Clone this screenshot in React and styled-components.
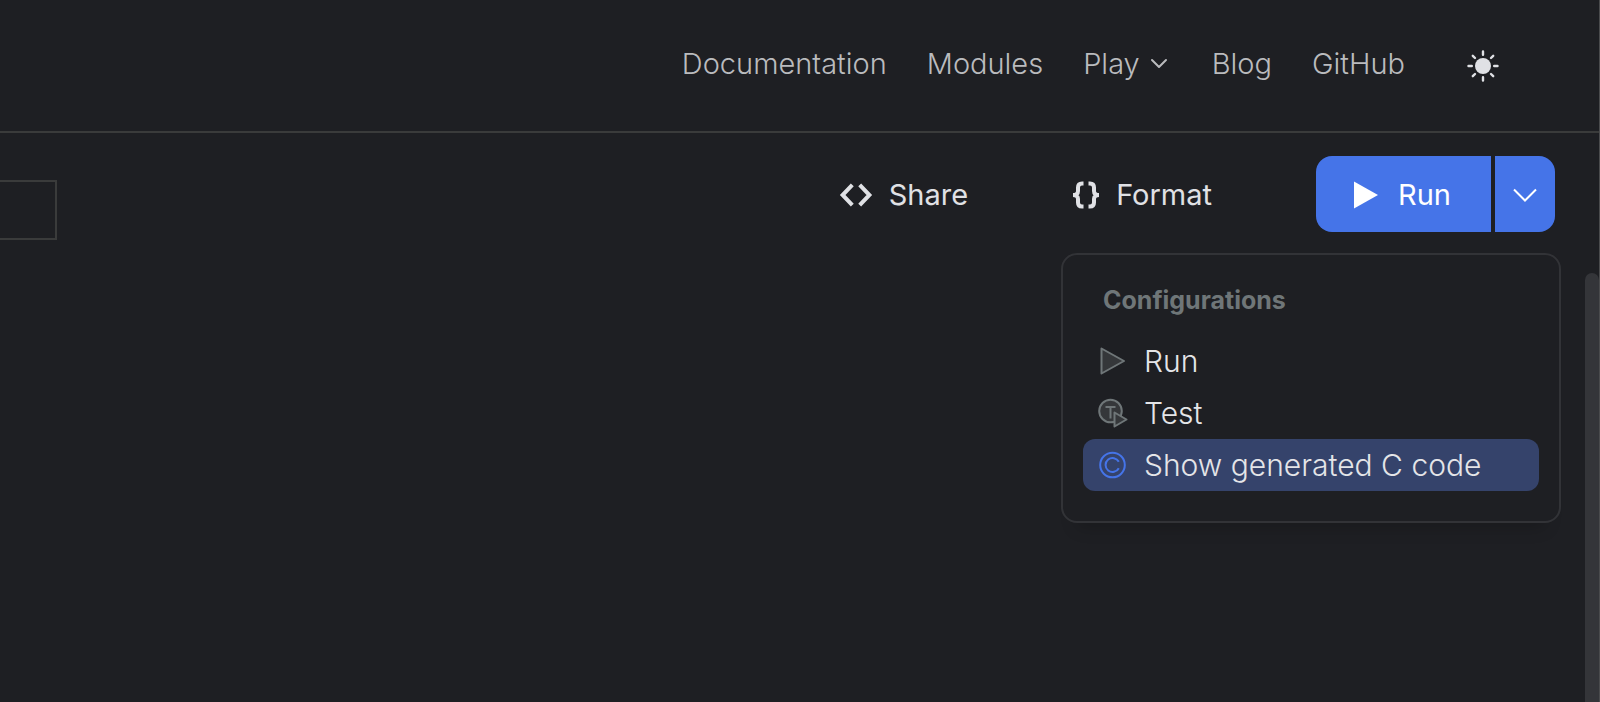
import React from "react";
import styled, { createGlobalStyle } from "styled-components";

const GlobalStyle = createGlobalStyle`
  *, *::before, *::after { box-sizing: border-box; }
  body {
    margin: 0;
    background: #1e1f23;
    font-family: Inter, "Liberation Sans", sans-serif;
    font-size: 29px;
    line-height: 36px;
    color: #e0e1e5;
  }
  button { font: inherit; color: inherit; background: none; border: 0; padding: 0; cursor: pointer; }
  svg { display: block; flex: none; }
`;

const Page = styled.div`
  display: flex;
  flex-direction: column;
  min-height: 100vh;
  overflow: hidden;
  border-right: 1px solid #4a4b4d;
`;

const Header = styled.header`
  display: flex;
  align-items: flex-end;
  justify-content: flex-end;
  padding: 46px 100px 49px 0;
  border-bottom: 2px solid #3a3b3b;
`;

const Nav = styled.nav`
  display: flex;
  align-items: center;
  gap: 40px;
  font-weight: 350;
  color: #babbbe;
`;

const NavLink = styled.a`
  color: inherit;
  text-decoration: none;
`;

const NavMenu = styled.button`
  display: flex;
  align-items: center;
  gap: 10px;
  padding-right: 4px;
`;

const ThemeButton = styled.button`
  margin-left: 62px;
`;

const Toolbar = styled.div`
  display: flex;
  align-items: flex-start;
  justify-content: space-between;
  padding: 23px 44px 0 0;
`;

const SelectFrame = styled.div`
  width: 57px;
  height: 60px;
  margin-top: 24px;
  border: 2px solid #3a3b3b;
  border-left: 0;
`;

const Actions = styled.div`
  display: flex;
  align-items: center;
`;

const ActionButton = styled.button`
  display: flex;
  align-items: center;
  gap: 16px;
  height: 76px;
  padding-top: 2px;
  margin-right: 104px;
`;

const RunGroup = styled.div`
  position: relative;
  display: flex;
  gap: 4px;
  color: #fff;
`;

const RunButton = styled.button`
  display: flex;
  align-items: center;
  gap: 20px;
  height: 76px;
  padding: 2px 40px 0 38px;
  border-radius: 16px 0 0 16px;
  background: #4574e8;
`;

const RunToggle = styled.button`
  display: flex;
  align-items: center;
  justify-content: center;
  width: 60px;
  height: 76px;
  padding-top: 2px;
  border-radius: 0 16px 16px 0;
  background: #4574e8;
`;

const Menu = styled.div`
  position: absolute;
  top: calc(100% + 21px);
  right: -6px;
  width: 500px;
  padding: 27px 20px 30px;
  border: 2px solid #323337;
  border-radius: 16px;
  background: #1e1f23;
  box-shadow: 0 20px 16px -16px rgba(0, 0, 0, 0.2);
  color: #e4e5e8;
`;

const MenuTitle = styled.h2`
  margin: 0 0 17px;
  padding-left: 20px;
  font-size: 25px;
  line-height: 36px;
  font-weight: 700;
  color: #6f7678;
`;

const MenuItem = styled.button`
  display: flex;
  align-items: center;
  gap: 16px;
  width: 100%;
  height: 52px;
  padding-left: 15px;
  border-radius: 12px;
  font-size: 30px;
  font-weight: 350;
  background: ${(p) => (p.$selected ? "#35436b" : "transparent")};
`;

const Body = styled.main`
  display: flex;
  flex: 1;
  justify-content: flex-end;
  padding-top: 33px;
`;

const ScrollThumb = styled.div`
  width: 14px;
  border-radius: 8px 8px 0 0;
  background: #343539;
`;

const SunIcon = () => (
  <svg width="32" height="32" viewBox="0 0 32 32" fill="none" stroke="#e0e1e5" strokeWidth="2.400" strokeLinecap="round">
    <circle cx="16" cy="16" r="8" fill="#e0e1e5" stroke="none" />
    <path d="M16 1.500v3.300M16 27.200v3.300M1.500 16h3.300M27.200 16h3.300M5.800 5.800l2.200 2.200M24 24l2.200 2.200M26.200 5.800l-2.200 2.200M8 24l-2.200 2.200" />
  </svg>
);

const NavChevron = () => (
  <svg width="18" height="12" viewBox="0 0 18 12" fill="none" stroke="currentColor" strokeWidth="2" strokeLinecap="round" strokeLinejoin="round">
    <path d="M2 2L9 9l7-7" />
  </svg>
);

const ShareIcon = () => (
  <svg width="34" height="24" viewBox="0 0 34 24" fill="none" stroke="currentColor" strokeWidth="4">
    <path d="M13.300 1.800L3.600 12l9.700 10.200M20.700 1.800L30.400 12l-9.700 10.200" />
  </svg>
);

const BracesIcon = () => (
  <svg width="28" height="28" viewBox="0 0 28 28" fill="none" stroke="currentColor" strokeWidth="4">
    <path d="M11.500 2.500H10C7 2.500 6 4 6 6.500v3.500c0 2.500-1.500 4-5 4c3.500 0 5 1.500 5 4v3.500c0 2.500 1 4 4 4h1.500M16.500 2.500H18c3 0 4 1.500 4 4v3.500c0 2.500 1.500 4 5 4c-3.500 0-5 1.500-5 4v3.500c0 2.500-1 4-4 4h-1.500" />
  </svg>
);

const PlayIcon = () => (
  <svg width="24" height="28" viewBox="0 0 24 28" fill="currentColor">
    <path d="M0 0.500L24 14L0 27.500z" />
  </svg>
);

const ToggleChevron = () => (
  <svg width="24" height="14" viewBox="0 0 24 14" fill="none" stroke="currentColor" strokeWidth="2">
    <path d="M1 1.500L12 12.500L23 1.500" />
  </svg>
);

const RunIcon = () => (
  <svg width="30" height="30" viewBox="0 0 30 30" fill="#35373a" stroke="#6f7678" strokeWidth="2" strokeLinejoin="round">
    <path d="M3.500 2.500L26 15L3.500 27.500z" />
  </svg>
);

const TestIcon = () => (
  <svg width="30" height="30" viewBox="0 0 30 30" fill="#35373a" stroke="#6f7678" strokeWidth="2" strokeLinejoin="round">
    <circle cx="12.500" cy="13" r="11.300" />
    <path d="M7.500 9h10M12.500 9v11.500" />
    <path d="M16.500 14.500l12 7L16.500 28.500z" />
  </svg>
);

const CIcon = () => (
  <svg width="30" height="30" viewBox="0 0 30 30" fill="none" stroke="#4574e8" strokeWidth="2">
    <circle cx="14.500" cy="15" r="12.300" />
    <path d="M20.800 11.800A7 7 0 1 0 20.800 18.200" />
  </svg>
);

const configurations = [
  { label: "Run", Icon: RunIcon },
  { label: "Test", Icon: TestIcon },
  { label: "Show generated C code", Icon: CIcon, selected: true },
];

export default function App() {
  return (
    <Page>
      <GlobalStyle />
      <Header>
        <Nav>
          <NavLink href="#documentation">Documentation</NavLink>
          <NavLink href="#modules">Modules</NavLink>
          <NavMenu type="button">
            Play
            <NavChevron />
          </NavMenu>
          <NavLink href="#blog">Blog</NavLink>
          <NavLink href="#github">GitHub</NavLink>
        </Nav>
        <ThemeButton type="button" aria-label="Switch theme">
          <SunIcon />
        </ThemeButton>
      </Header>
      <Toolbar>
        <SelectFrame />
        <Actions>
          <ActionButton type="button">
            <ShareIcon />
            Share
          </ActionButton>
          <ActionButton type="button">
            <BracesIcon />
            Format
          </ActionButton>
          <RunGroup>
            <RunButton type="button">
              <PlayIcon />
              Run
            </RunButton>
            <RunToggle type="button" aria-label="Choose configuration" aria-expanded="true">
              <ToggleChevron />
            </RunToggle>
            <Menu>
              <MenuTitle>Configurations</MenuTitle>
              {configurations.map(({ label, Icon, selected }) => (
                <MenuItem key={label} type="button" $selected={selected}>
                  <Icon />
                  {label}
                </MenuItem>
              ))}
            </Menu>
          </RunGroup>
        </Actions>
      </Toolbar>
      <Body>
        <ScrollThumb />
      </Body>
    </Page>
  );
}
